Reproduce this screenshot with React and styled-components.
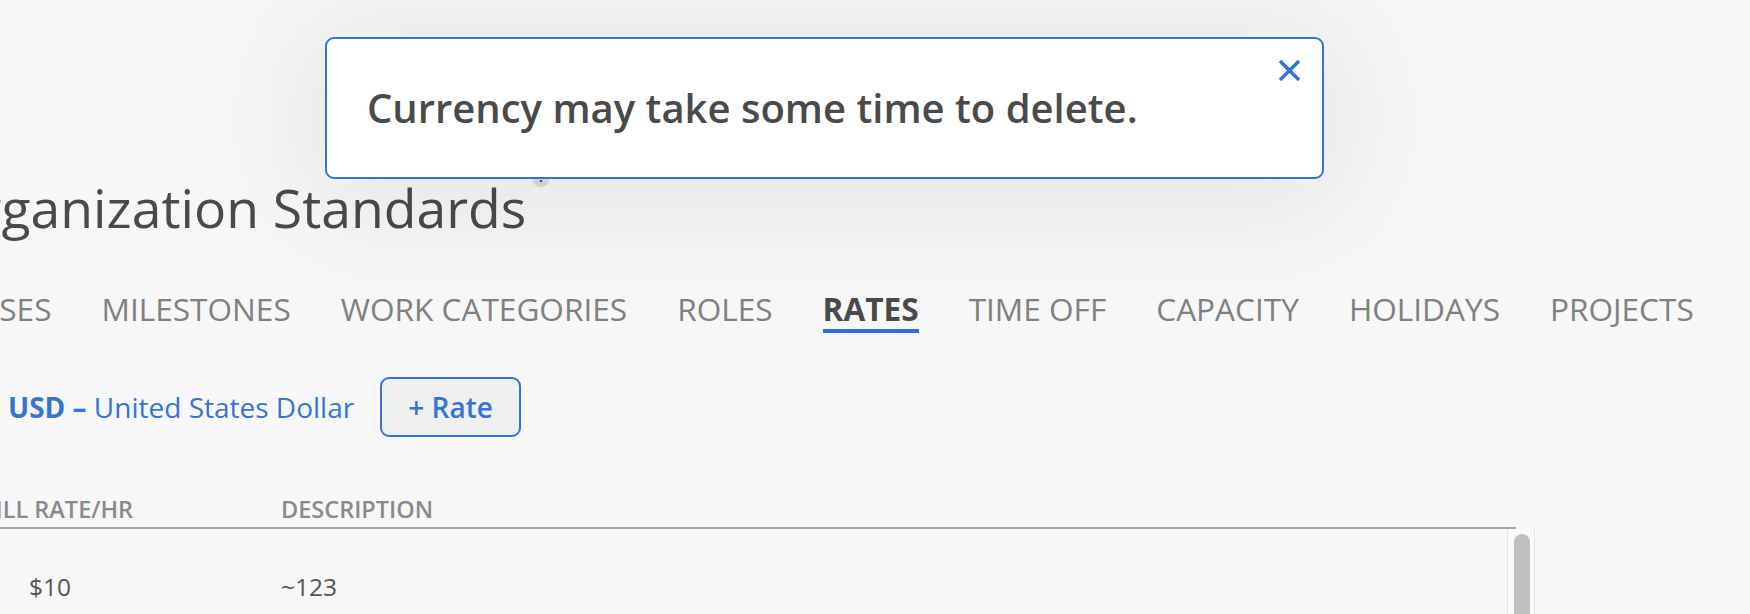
import React from 'react'
import styled, { createGlobalStyle } from 'styled-components'

const blue = '#3574d4'
const dark = '#4a4a4a'

const GlobalStyle = createGlobalStyle`
  html, body {
    margin: 0;
    padding: 0;
    overflow: hidden;
    background: #f7f7f7;
    font-family: "Open Sans", "Noto Sans", sans-serif;
  }
`

const Screen = styled.div`
  position: relative;
  width: 1750px;
  height: 614px;
  overflow: hidden;
`

const Page = styled.div`
  margin-left: -62px;
  padding-top: 181px;
`

const Title = styled.h1`
  margin: 0;
  font-size: 53.5px;
  line-height: 1;
  font-weight: 400;
  color: ${dark};
  white-space: nowrap;
`

const Help = styled.span`
  display: inline-flex;
  align-items: center;
  justify-content: center;
  width: 18px;
  height: 18px;
  margin-left: 6px;
  border-radius: 50%;
  background: #dcdcdc;
  color: #333;
  font-size: 12px;
  font-weight: 700;
  vertical-align: top;
  margin-top: -12px;
`

const Tabs = styled.nav`
  display: flex;
  gap: 50px;
  margin-top: 58px;
  margin-left: -1px;
`

const Tab = styled.div`
  font-size: 31.6px;
  line-height: 1;
  padding-bottom: 5px;
  border-bottom: 4px solid ${(p) => (p.active ? '#2f6fd6' : 'transparent')};
  color: ${(p) => (p.active ? dark : '#808080')};
  font-weight: ${(p) => (p.active ? 700 : 400)};
  white-space: nowrap;
`

const CurrencyRow = styled.div`
  display: flex;
  align-items: center;
  gap: 26px;
  margin-top: 44px;
`

const Currency = styled.div`
  font-size: 28px;
  line-height: 1;
  color: ${blue};
  white-space: nowrap;
  padding-left: 70px;
  b {
    font-weight: 700;
  }
`

const AddButton = styled.button`
  height: 60px;
  width: 141px;
  border: 2px solid ${blue};
  border-radius: 9px;
  background: #efefef;
  color: ${blue};
  font-family: inherit;
  font-size: 28px;
  font-weight: 600;
  padding: 0;
`

const Table = styled.div`
  margin-left: 42px;
  margin-top: 59px;
`

const HeadRow = styled.div`
  display: grid;
  grid-template-columns: 301px 1fr;
  width: 1536px;
  padding-top: 2px;
  padding-bottom: 5px;
  border-bottom: 2px solid #a6a6a6;
`

const HeadCell = styled.div`
  font-size: 23.5px;
  line-height: 1;
  font-weight: 600;
  color: #8a8a8a;
  white-space: nowrap;
`

const Body = styled.div`
  display: flex;
  width: 1555px;
  height: 300px;
`

const Rows = styled.div`
  flex: 1;
`

const ScrollTrack = styled.div`
  width: 28px;
  padding: 5px 4px 0 6px;
  box-sizing: border-box;
  background: #fafafa;
  border-left: 1px solid #e4e4e4;
  border-right: 1px solid #e4e4e4;
`

const Thumb = styled.div`
  width: 16px;
  height: 220px;
  border-radius: 8px;
  background: #c1c1c1;
`

const Row = styled.div`
  display: grid;
  grid-template-columns: 301px 1fr;
  padding-top: 46px;
  padding-bottom: 30px;
`

const Cell = styled.div`
  font-size: 24.5px;
  line-height: 1;
  color: #555;
  padding-left: ${(p) => p.indent || 0}px;
`

const Toast = styled.div`
  position: absolute;
  left: 325px;
  top: 37px;
  width: 999px;
  height: 142px;
  box-sizing: border-box;
  display: flex;
  align-items: center;
  padding-left: 40px;
  background: #fff;
  border: 2px solid ${blue};
  border-radius: 9px;
  box-shadow: 0 10px 120px 24px rgba(0, 0, 0, 0.07);
  font-size: 40px;
  line-height: 1;
  font-weight: 600;
  color: ${dark};
`

const Close = styled.button`
  position: absolute;
  top: 19px;
  right: 20px;
  width: 25px;
  height: 25px;
  padding: 0;
  border: 0;
  background: none;
  display: flex;
`

const tabs = ['PHASES', 'MILESTONES', 'WORK CATEGORIES', 'ROLES', 'RATES', 'TIME OFF', 'CAPACITY', 'HOLIDAYS', 'PROJECTS']

const rates = [
  { rate: '$10', description: '~123' },
  { rate: '$25', description: 'Standard' },
  { rate: '$40', description: 'Senior' },
]

export default function App() {
  return (
    <Screen>
      <GlobalStyle />
      <Page>
        <Title>
          Organization Standards<Help>?</Help>
        </Title>
        <Tabs>
          {tabs.map((t) => (
            <Tab key={t} active={t === 'RATES'}>
              {t}
            </Tab>
          ))}
        </Tabs>
        <CurrencyRow>
          <Currency>
            <b>USD –</b> United States Dollar
          </Currency>
          <AddButton>+ Rate</AddButton>
        </CurrencyRow>
        <Table>
          <HeadRow>
            <HeadCell>BILL RATE/HR</HeadCell>
            <HeadCell>DESCRIPTION</HeadCell>
          </HeadRow>
          <Body>
            <Rows>
              {rates.map((r) => (
                <Row key={r.rate}>
                  <Cell indent={49}>{r.rate}</Cell>
                  <Cell>{r.description}</Cell>
                </Row>
              ))}
            </Rows>
            <ScrollTrack>
              <Thumb />
            </ScrollTrack>
          </Body>
        </Table>
      </Page>
      <Toast>
        Currency may take some time to delete.
        <Close aria-label="Close">
          <svg width="25" height="25" viewBox="0 0 25 25">
            <path d="M3 3 L22 22 M22 3 L3 22" stroke={blue} strokeWidth="3.6" />
          </svg>
        </Close>
      </Toast>
    </Screen>
  )
}
